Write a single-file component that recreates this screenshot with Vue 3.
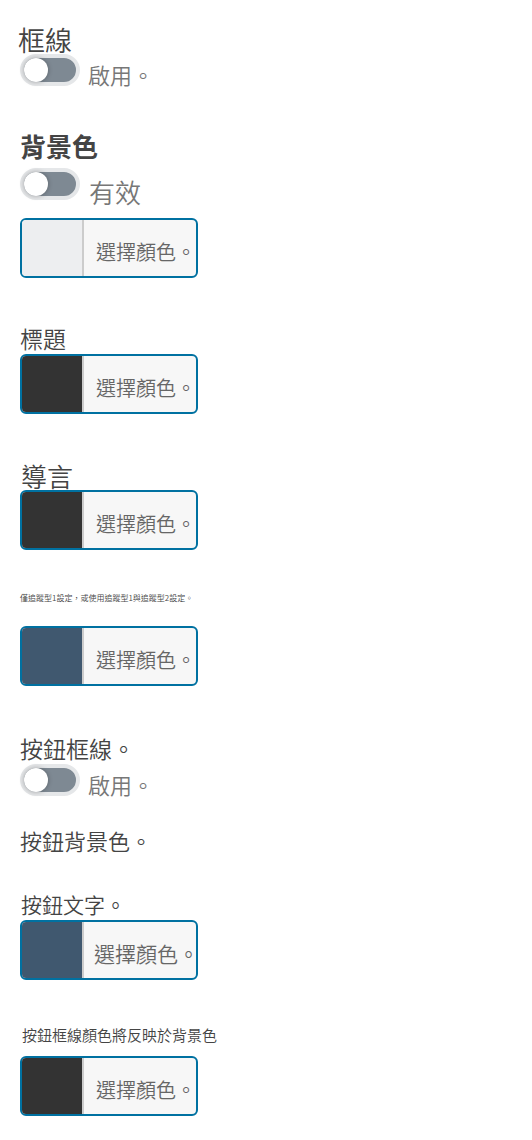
<script setup>
import { reactive } from 'vue';

const fields = reactive([
  { id: 'border', label: '框線', size: 'xxl', toggle: '啟用。', on: false },
  { id: 'background', label: '背景色', size: 'bold', toggle: '有效', toggleSize: 'large', on: false, color: 'light' },
  { id: 'title', label: '標題', size: 'lg', color: 'dark' },
  { id: 'lead', label: '導言', size: 'xl', color: 'dark' },
  { id: 'tracking', label: '僅追蹤型1設定，或使用追蹤型1與追蹤型2設定。', size: 'tiny', color: 'blue' },
  { id: 'button-border', label: '按鈕框線。', size: 'lg', toggle: '啟用。', on: false },
  { id: 'button-background', label: '按鈕背景色。', size: 'md' },
  { id: 'button-text', label: '按鈕文字。', size: 'sm', color: 'blue', wide: true },
  { id: 'button-border-color', label: '按鈕框線顏色將反映於背景色', size: 'note', color: 'dark' },
]);
</script>

<template>
  <form class="settings" @submit.prevent>
    <section v-for="field in fields" :key="field.id" class="field" :class="field.id">
      <h3 :id="field.id + '-label'" class="label" :class="field.size">{{ field.label }}</h3>

      <div v-if="field.toggle" class="toggle">
        <input :id="field.id" v-model="field.on" type="checkbox" class="switch">
        <label :for="field.id" class="toggle-text" :class="field.toggleSize">{{ field.toggle }}</label>
      </div>

      <button
        v-if="field.color"
        :id="field.id + '-color'"
        type="button"
        class="picker"
        :aria-labelledby="field.id + '-label ' + field.id + '-color'"
      >
        <span class="swatch" :class="field.color"></span>
        <span class="picker-text" :class="{ wide: field.wide }">選擇顏色。</span>
      </button>
    </section>
  </form>
</template>

<style>
body {
  background: #fff;
}
</style>

<style scoped>
.settings {
  display: flex;
  flex-direction: column;
  gap: 40px;
  padding: 18px 18px 24px;
  font-family: "Noto Sans CJK TC", "Noto Sans", sans-serif;
  font-weight: 350;
}
.field {
  display: flex;
  flex-direction: column;
  align-items: flex-start;
  padding-left: 2px;
}
.border {
  padding-left: 0;
}
.border .toggle {
  padding-left: 2px;
}
.label {
  margin: 0;
  padding: 6px 0 2px;
  line-height: 28px;
  font-weight: 350;
  color: #444;
}
.label.xxl {
  padding: 8px 0 0;
  font-size: 27px;
}
.label.xl {
  padding: 8px 0 0 1px;
  font-size: 26px;
}
.label.bold {
  font-size: 26px;
  font-weight: 700;
  margin-bottom: 6px;
}
.label.lg {
  font-size: 23px;
}
.label.md {
  font-size: 22px;
}
.label.sm {
  padding-left: 1px;
  font-size: 21px;
}
.label.note {
  padding: 1px 0 7px 2px;
  font-size: 15px;
}
.label.tiny {
  padding: 0 0 20px;
  font-size: 8px;
  line-height: 16px;
}
.button-border {
  margin-top: 2px;
}
.button-background {
  margin: -16px 0 -12px;
}

/* Interrupteur */
.toggle {
  display: flex;
  gap: 8px;
  height: 32px;
}
.switch {
  appearance: none;
  flex: none;
  box-sizing: border-box;
  width: 60px;
  height: 32px;
  margin: 0;
  border: 4px solid #e5e7e9;
  border-radius: 16px;
  background: #7e8993;
  cursor: pointer;
}
.switch::before {
  content: "";
  display: block;
  width: 24px;
  height: 24px;
  border-radius: 50%;
  background: #fff;
  box-shadow: 0 0 5px rgba(0, 0, 0, 0.3);
}
.switch:checked::before {
  margin-left: 28px;
}
.toggle-text {
  padding-top: 4px;
  font-size: 22px;
  line-height: 32px;
  color: #777;
}
.toggle-text.large {
  padding: 8px 0 0 1px;
  font-size: 26px;
}
.toggle + .picker {
  margin-top: 18px;
}

/* Bouton de couleur */
.picker {
  display: flex;
  box-sizing: border-box;
  width: 178px;
  height: 60px;
  padding: 0;
  border: 2px solid #0071a1;
  border-radius: 6px;
  background: #f7f7f7;
  font: inherit;
  color: #666;
  cursor: pointer;
}
.swatch {
  flex: none;
  align-self: stretch;
  width: 60px;
  border-right: 2px solid #ccc;
  border-radius: 4px 0 0 4px;
}
.swatch.light {
  background: #edeef0;
}
.swatch.dark {
  background: #333;
}
.swatch.blue {
  background: #40586f;
}
.picker-text {
  padding: 4px 0 0 12px;
  font-size: 20px;
  line-height: 56px;
  white-space: nowrap;
}
.picker-text.wide {
  padding: 3px 0 0 10px;
  font-size: 21px;
}
</style>
